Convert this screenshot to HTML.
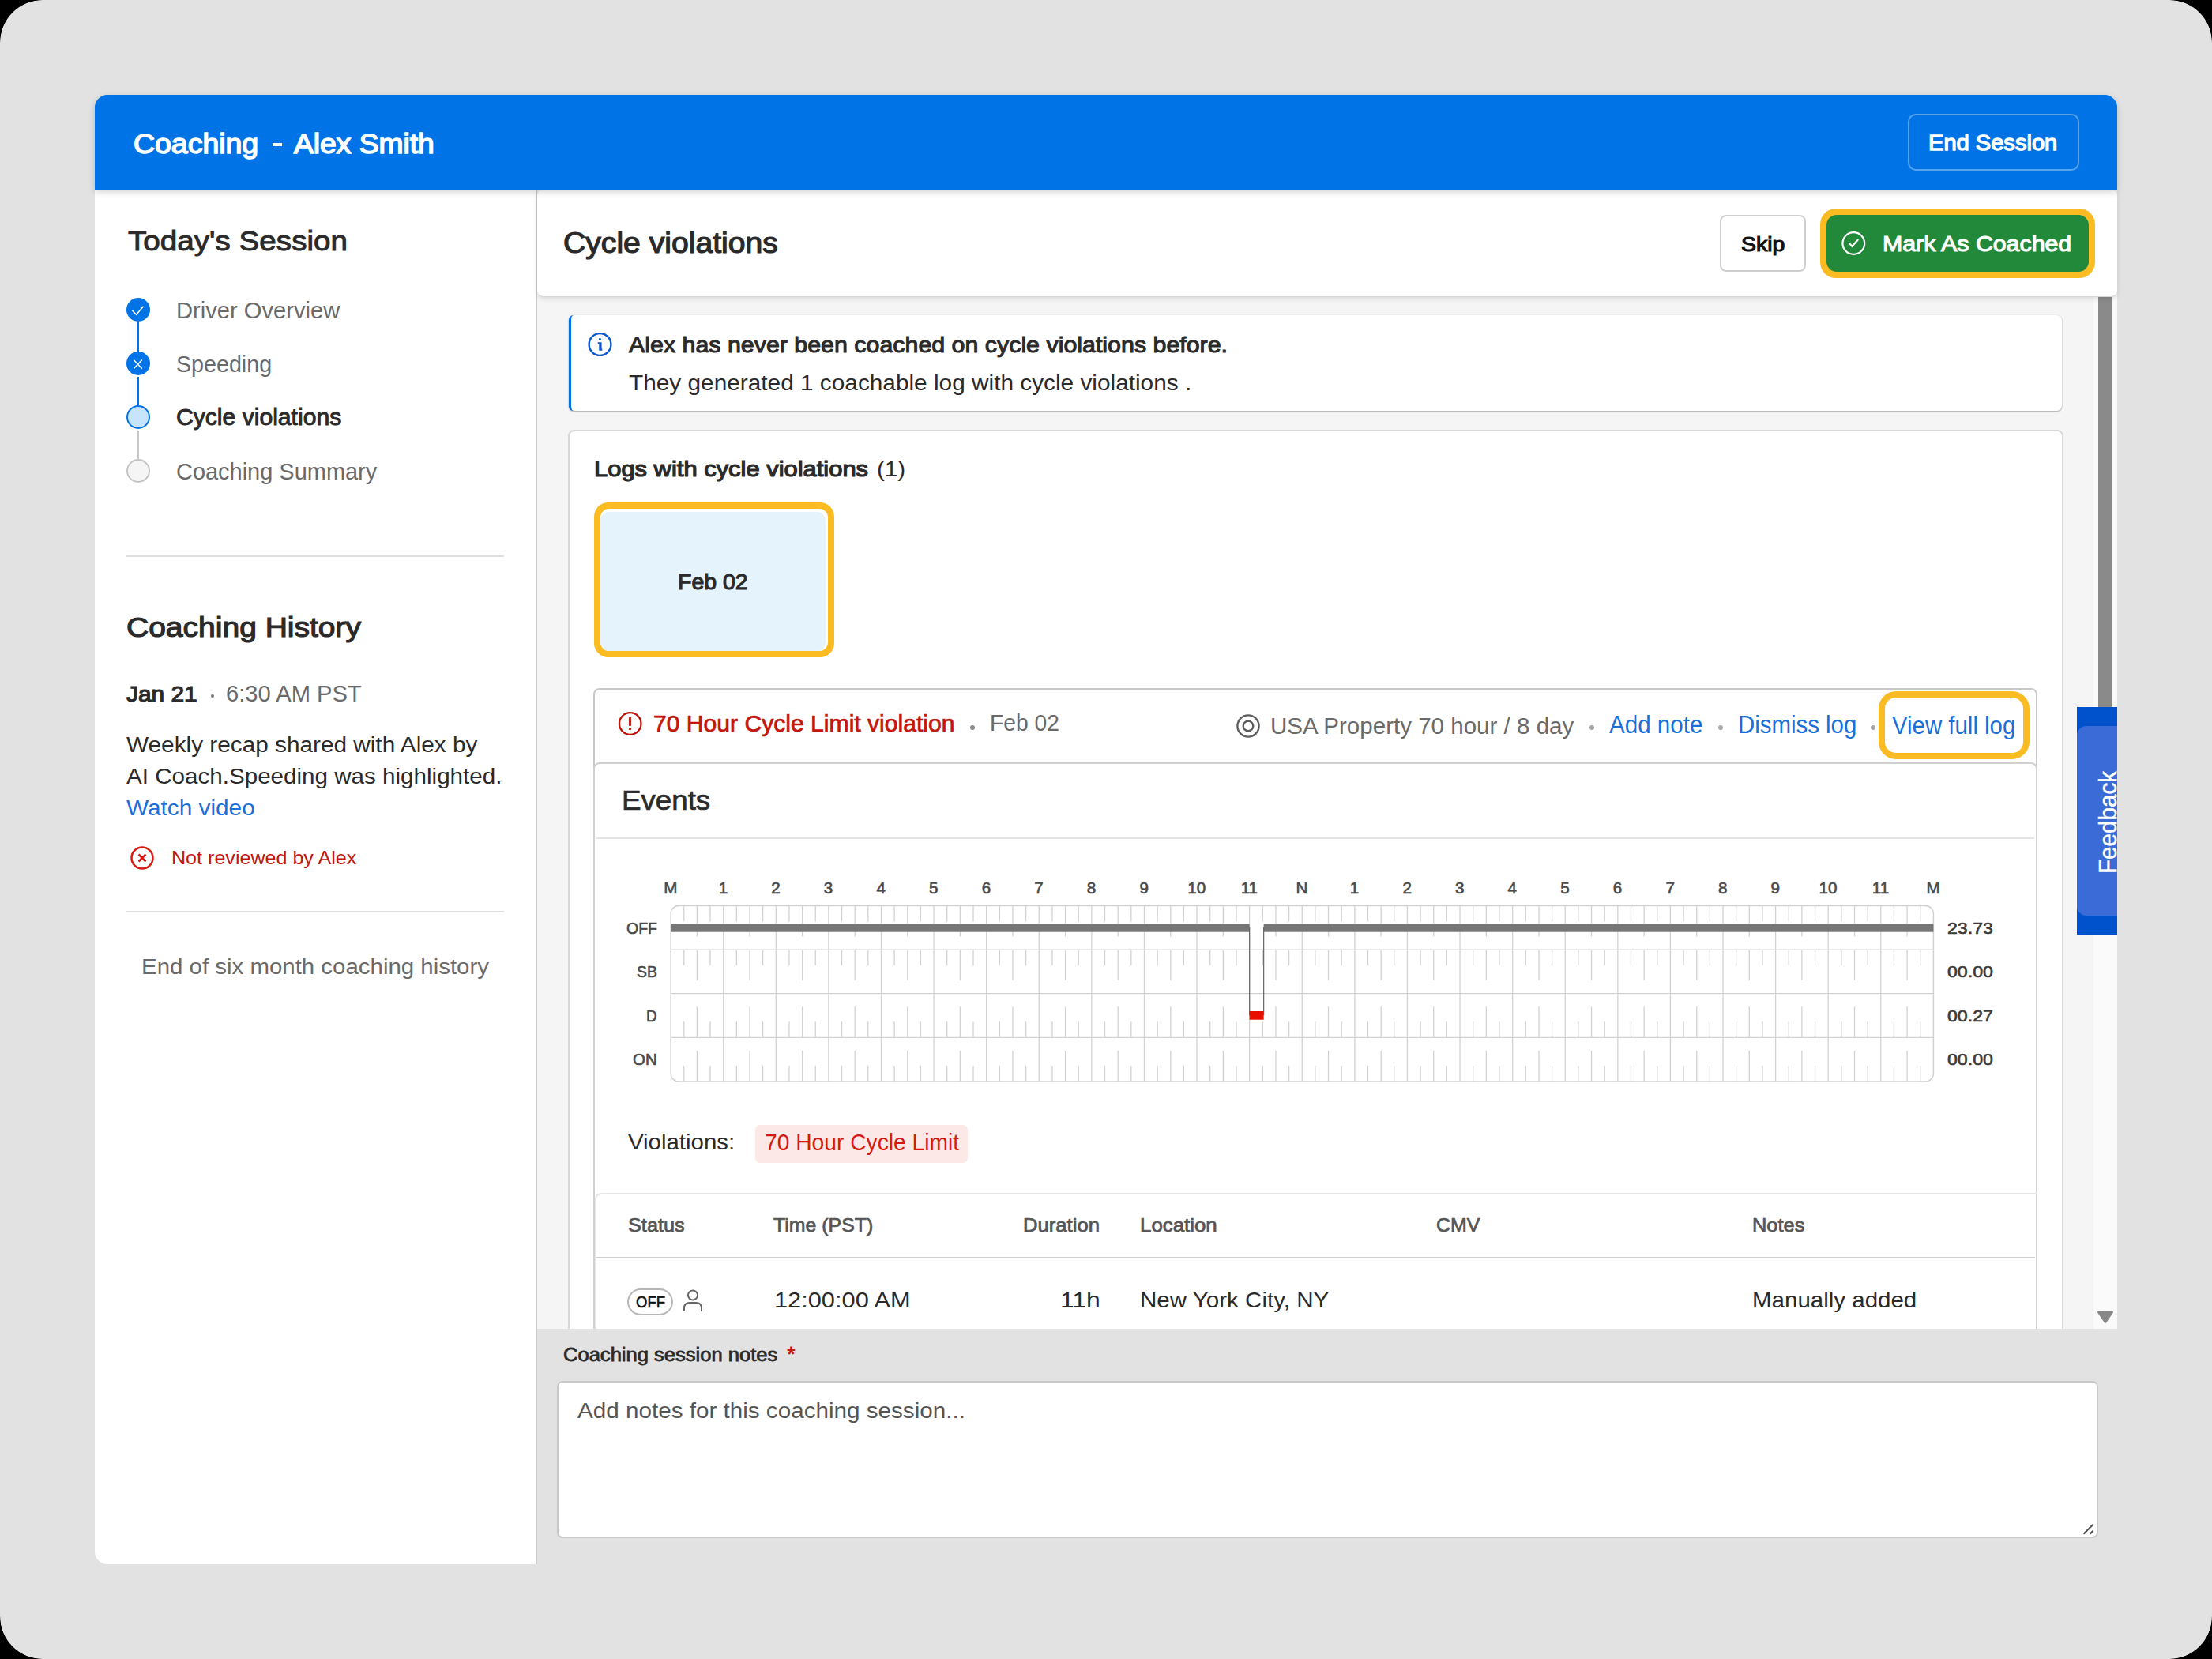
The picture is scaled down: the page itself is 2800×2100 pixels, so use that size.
<!DOCTYPE html>
<html><head><meta charset="utf-8"><title>Coaching - Alex Smith</title>
<style>
html,body{margin:0;padding:0;}
body{width:2800px;height:2100px;position:relative;overflow:hidden;background:#000;font-family:"Liberation Sans",sans-serif;}
.b{position:absolute;}
.t{position:absolute;white-space:nowrap;line-height:1;}
#clip{position:absolute;left:0;top:0;width:2800px;height:2100px;overflow:hidden;border-radius:54px;}
</style></head><body><div id="clip">
<div class="b" style="left:0.00px;top:0.00px;width:2800.00px;height:2100.00px;background:#e2e2e2;border-radius:54px;"></div>
<div class="b" style="left:120.00px;top:200.00px;width:560.00px;height:1780.00px;background:#fff;border-bottom-left-radius:16px;"></div>
<div class="b" style="left:678.00px;top:240.00px;width:2.00px;height:1740.00px;background:#c9c9c9;"></div>
<div class="b" style="left:680.00px;top:240.00px;width:2000.00px;height:1442.00px;background:#f5f5f5;"></div>
<div class="b" style="left:2650.00px;top:376.00px;width:30.00px;height:1306.00px;background:#fafafa;"></div>
<div class="b" style="left:2656.00px;top:376.00px;width:17.00px;height:519.00px;background:#8a8a8a;"></div>
<svg class="b" style="left:2654px;top:1658px" width="22" height="18"><path d="M2.5 3 L19.5 3 L11 15.5 Z" fill="#888" stroke="#888" stroke-width="3" stroke-linejoin="round"/></svg>
<div class="b" style="left:120.00px;top:120.00px;width:2560.00px;height:120.00px;background:#0073e6;border-radius:16px 16px 0 0;box-shadow:0 3px 8px rgba(0,0,0,0.18);z-index:2;"></div>
<div class="t" style="top:164.58px;font-size:34.27px;color:#fff;font-weight:400;-webkit-text-stroke:1.54px #fff;left:169.20px;transform:scaleX(1.0924);transform-origin:0 0;z-index:3;">Coaching</div>
<div class="b" style="left:344.60px;top:181.40px;width:12.70px;height:4.00px;background:#fff;z-index:3;"></div>
<div class="t" style="top:164.58px;font-size:34.27px;color:#fff;font-weight:400;-webkit-text-stroke:1.54px #fff;left:372.00px;transform:scaleX(1.0854);transform-origin:0 0;z-index:3;">Alex Smith</div>
<div class="b" style="left:2415.00px;top:144.00px;width:217.00px;height:72.00px;border:2px solid rgba(255,255,255,0.35);border-radius:10px;box-sizing:border-box;z-index:3;"></div>
<div class="t" style="top:166.13px;font-size:28.19px;color:#fff;font-weight:400;-webkit-text-stroke:1.36px #fff;left:2441.00px;transform:scaleX(1.0313);transform-origin:0 0;z-index:3;">End Session</div>
<div class="t" style="top:287.69px;font-size:34.62px;color:#2a2a2a;font-weight:400;-webkit-text-stroke:0.92px #2a2a2a;left:162.00px;transform:scaleX(1.1166);transform-origin:0 0;">Today's Session</div>
<div class="b" style="left:174.25px;top:408.00px;width:1.50px;height:37.00px;background:#0073e6;"></div>
<div class="b" style="left:174.25px;top:477.00px;width:1.50px;height:36.00px;background:#0073e6;"></div>
<div class="b" style="left:174.25px;top:545.00px;width:1.50px;height:36.00px;background:#c8c8c8;"></div>
<svg class="b" style="left:159px;top:376px" width="32" height="32"><circle cx="16" cy="16" r="15" fill="#0073e6"/><path d="M8.4 16.9 L13.5 22.3 L22.5 11.8" fill="none" stroke="#fff" stroke-width="1.5"/></svg>
<svg class="b" style="left:159px;top:444px" width="32" height="32"><circle cx="16" cy="16" r="15" fill="#0073e6"/><path d="M10.2 11.5 L20.8 22.8 M20.8 11.5 L10.2 22.8" fill="none" stroke="#fff" stroke-width="1.5"/></svg>
<svg class="b" style="left:159px;top:512px" width="32" height="32"><circle cx="16" cy="16" r="14" fill="#c6e4fb" stroke="#0073e6" stroke-width="2"/></svg>
<svg class="b" style="left:159px;top:580px" width="32" height="32"><circle cx="16" cy="16" r="14" fill="#f5f5f5" stroke="#c4c4c4" stroke-width="2"/></svg>
<div class="t" style="top:377.67px;font-size:29.33px;color:#6a6a6a;font-weight:400;left:223.00px;transform:scaleX(0.9934);transform-origin:0 0;">Driver Overview</div>
<div class="t" style="top:445.67px;font-size:29.33px;color:#6a6a6a;font-weight:400;left:223.00px;transform:scaleX(0.9772);transform-origin:0 0;">Speeding</div>
<div class="t" style="top:514.04px;font-size:28.89px;color:#2a2a2a;font-weight:400;-webkit-text-stroke:0.96px #2a2a2a;left:223.00px;transform:scaleX(1.0429);transform-origin:0 0;">Cycle violations</div>
<div class="t" style="top:581.67px;font-size:29.33px;color:#6a6a6a;font-weight:400;left:223.00px;transform:scaleX(0.9872);transform-origin:0 0;">Coaching Summary</div>
<div class="b" style="left:160.00px;top:703.00px;width:478.00px;height:2.00px;background:#e0e0e0;"></div>
<div class="t" style="top:777.24px;font-size:34.79px;color:#2a2a2a;font-weight:400;-webkit-text-stroke:1.16px #2a2a2a;left:160.00px;transform:scaleX(1.1216);transform-origin:0 0;">Coaching History</div>
<div class="t" style="top:864.32px;font-size:28.56px;color:#2a2a2a;font-weight:400;-webkit-text-stroke:1.19px #2a2a2a;left:160.00px;transform:scaleX(1.0453);transform-origin:0 0;">Jan 21</div>
<div class="b" style="left:266.50px;top:878.50px;width:4.00px;height:4.00px;background:#777;border-radius:50%;"></div>
<div class="t" style="top:863.95px;font-size:29.00px;color:#6a6a6a;font-weight:400;left:286.00px;transform:scaleX(1.0049);transform-origin:0 0;">6:30 AM PST</div>
<div class="t" style="top:929.19px;font-size:28.13px;color:#2a2a2a;font-weight:400;left:160.00px;transform:scaleX(1.0581);transform-origin:0 0;">Weekly recap shared with Alex by</div>
<div class="t" style="top:968.89px;font-size:28.13px;color:#2a2a2a;font-weight:400;left:160.00px;transform:scaleX(1.0521);transform-origin:0 0;">AI Coach.Speeding was highlighted.</div>
<div class="t" style="top:1008.59px;font-size:28.13px;color:#1a6fd9;font-weight:400;left:160.00px;transform:scaleX(1.0587);transform-origin:0 0;">Watch video</div>
<svg class="b" style="left:164px;top:1070px" width="32" height="32"><circle cx="16" cy="16" r="13.5" fill="none" stroke="#d81b12" stroke-width="2.5"/><path d="M11.5 11.5 L20.5 20.5 M20.5 11.5 L11.5 20.5" stroke="#d81b12" stroke-width="2.5"/></svg>
<div class="t" style="top:1074.08px;font-size:24.71px;color:#c4160c;font-weight:400;left:216.50px;transform:scaleX(1.0158);transform-origin:0 0;">Not reviewed by Alex</div>
<div class="b" style="left:160.00px;top:1153.00px;width:478.00px;height:2.00px;background:#e0e0e0;"></div>
<div class="t" style="top:1210.93px;font-size:27.01px;color:#6a6a6a;font-weight:400;left:179.00px;transform:scaleX(1.0899);transform-origin:0 0;">End of six month coaching history</div>
<div class="b" style="left:680.00px;top:240.00px;width:2000.00px;height:136.00px;background:#fff;border-radius:8px;border-bottom:1px solid #d6d6d6;box-sizing:border-box;box-shadow:0 2px 6px rgba(0,0,0,0.12);z-index:1;"></div>
<div class="t" style="top:289.86px;font-size:36.07px;color:#2a2a2a;font-weight:400;-webkit-text-stroke:1.20px #2a2a2a;left:713.30px;transform:scaleX(1.0853);transform-origin:0 0;z-index:1;">Cycle violations</div>
<div class="b" style="left:2177.00px;top:272.00px;width:109.00px;height:72.00px;background:#fff;border:2px solid #cfcfcf;border-radius:8px;box-sizing:border-box;z-index:1;"></div>
<div class="t" style="top:296.18px;font-size:26.25px;color:#111;font-weight:400;-webkit-text-stroke:1.14px #111;left:2203.50px;transform:scaleX(1.0844);transform-origin:0 0;z-index:1;">Skip</div>
<div class="b" style="left:2304.00px;top:264.00px;width:348.00px;height:88.00px;background:#fbbc23;border-radius:20px;z-index:1;"></div>
<div class="b" style="left:2312.00px;top:272.00px;width:332.00px;height:72.00px;background:#22883a;border-radius:13px;z-index:1;"></div>
<svg class="b" style="left:2330px;top:291px;z-index:1" width="34" height="34"><circle cx="16.3" cy="17" r="13.9" fill="none" stroke="#fff" stroke-width="2.2"/><path d="M10.5 16.6 L14.4 20.8 L22.2 12.1" fill="none" stroke="#fff" stroke-width="2.2"/></svg>
<div class="t" style="top:295.30px;font-size:27.28px;color:#fff;font-weight:400;-webkit-text-stroke:1.09px #fff;left:2383.00px;transform:scaleX(1.1115);transform-origin:0 0;z-index:1;">Mark As Coached</div>
<div class="b" style="left:720.00px;top:399.00px;width:1890.00px;height:121.00px;background:#fff;border-radius:6px;border-left:3px solid #0073e6;box-shadow:0 1px 2px rgba(0,0,0,0.3), 0 0 1px rgba(0,0,0,0.2);box-sizing:border-box;"></div>
<svg class="b" style="left:743px;top:420px" width="34" height="34"><circle cx="16.5" cy="16" r="13.9" fill="none" stroke="#0b58cc" stroke-width="2.4"/><rect x="15" y="8.3" width="2.8" height="2.6" fill="#0b58cc"/><path d="M13.7 13.3 H18.6 V21.6 H19.3 V23.7 H15.3 V16 H13.7 Z" fill="#0b58cc"/></svg>
<div class="t" style="top:423.59px;font-size:27.06px;color:#2a2a2a;font-weight:400;-webkit-text-stroke:0.99px #2a2a2a;left:796.00px;transform:scaleX(1.1229);transform-origin:0 0;">Alex has never been coached on cycle violations before.</div>
<div class="t" style="top:470.74px;font-size:27.47px;color:#2a2a2a;font-weight:400;left:796.00px;transform:scaleX(1.0847);transform-origin:0 0;">They generated 1 coachable log with cycle violations .</div>
<div class="b" style="left:718.50px;top:544.00px;width:1893.00px;height:1176.00px;background:#fff;border:2px solid #d8d8d8;border-radius:8px;box-sizing:border-box;"></div>
<div class="t" style="top:580.00px;font-size:27.40px;color:#2a2a2a;font-weight:400;-webkit-text-stroke:1.23px #2a2a2a;left:752.40px;transform:scaleX(1.1286);transform-origin:0 0;">Logs with cycle violations</div>
<div class="t" style="top:579.65px;font-size:27.82px;color:#2a2a2a;font-weight:400;left:1110.40px;transform:scaleX(1.0654);transform-origin:0 0;">(1)</div>
<div class="b" style="left:752.00px;top:635.80px;width:304.00px;height:196.00px;background:#fbbc23;border-radius:18px;"></div>
<div class="b" style="left:760.00px;top:643.80px;width:288.00px;height:180.00px;background:#fff;border-radius:11px;"></div>
<div class="b" style="left:760.00px;top:648.00px;width:285.00px;height:175.80px;background:#e5f3fd;border-radius:11px;"></div>
<div class="t" style="top:722.58px;font-size:27.66px;color:#2a2a2a;font-weight:400;-webkit-text-stroke:1.11px #2a2a2a;left:857.80px;transform:scaleX(1.0293);transform-origin:0 0;">Feb 02</div>
<div class="b" style="left:751.00px;top:871.00px;width:1828.00px;height:849.00px;background:#fff;border:2px solid #c8c8c8;border-radius:8px;box-sizing:border-box;"></div>
<svg class="b" style="left:781px;top:900px" width="34" height="34"><circle cx="16.7" cy="16" r="13.8" fill="none" stroke="#c00f05" stroke-width="2.3"/><rect x="15.1" y="8" width="2.8" height="10.9" fill="#c00f05"/><rect x="15.1" y="21" width="2.8" height="2.9" fill="#c00f05"/></svg>
<div class="t" style="top:901.69px;font-size:28.71px;color:#c4160c;font-weight:400;-webkit-text-stroke:0.72px #c4160c;left:826.80px;transform:scaleX(1.0489);transform-origin:0 0;">70 Hour Cycle Limit violation</div>
<div class="b" style="left:1228.00px;top:918.00px;width:6.00px;height:6.00px;background:#888;border-radius:50%;"></div>
<div class="t" style="top:901.45px;font-size:29.00px;color:#6a6a6a;font-weight:400;left:1253.00px;transform:scaleX(0.9747);transform-origin:0 0;">Feb 02</div>
<svg class="b" style="left:1563px;top:902.3px" width="34" height="34"><circle cx="17" cy="17" r="13.6" fill="none" stroke="#5e5e5e" stroke-width="2.4"/><circle cx="17" cy="17" r="6.3" fill="none" stroke="#5e5e5e" stroke-width="2.4"/></svg>
<div class="t" style="top:904.20px;font-size:30.23px;color:#6a6a6a;font-weight:400;left:1608.00px;transform:scaleX(0.9776);transform-origin:0 0;">USA Property 70 hour / 8 day</div>
<div class="b" style="left:2011.50px;top:918.00px;width:6.00px;height:6.00px;background:#a8a8a8;border-radius:50%;"></div>
<div class="t" style="top:902.51px;font-size:30.81px;color:#1a6fd9;font-weight:400;left:2036.60px;transform:scaleX(0.9602);transform-origin:0 0;">Add note</div>
<div class="b" style="left:2174.50px;top:918.00px;width:6.00px;height:6.00px;background:#a8a8a8;border-radius:50%;"></div>
<div class="t" style="top:902.51px;font-size:30.81px;color:#1a6fd9;font-weight:400;left:2199.70px;transform:scaleX(0.9546);transform-origin:0 0;">Dismiss log</div>
<div class="b" style="left:2368.00px;top:918.00px;width:6.00px;height:6.00px;background:#a8a8a8;border-radius:50%;"></div>
<div class="b" style="left:2378.00px;top:874.60px;width:191.00px;height:86.40px;border:8px solid #fbbc23;border-radius:22px;box-sizing:border-box;"></div>
<div class="t" style="top:904.41px;font-size:30.81px;color:#1a6fd9;font-weight:400;left:2394.70px;transform:scaleX(0.9543);transform-origin:0 0;">View full log</div>
<div class="b" style="left:751.00px;top:965.00px;width:1828.00px;height:755.00px;background:#fff;border:2px solid #d0d0d0;border-radius:8px 8px 0 0;box-sizing:border-box;"></div>
<div class="t" style="top:995.90px;font-size:35.55px;color:#2a2a2a;font-weight:400;-webkit-text-stroke:0.71px #2a2a2a;left:787.00px;transform:scaleX(1.0326);transform-origin:0 0;">Events</div>
<div class="b" style="left:755.00px;top:1060.00px;width:1820.00px;height:2.00px;background:#e4e4e4;"></div>
<svg class="b" style="left:0;top:0" width="2800" height="2100"><line x1="915.70" y1="1146.40" x2="915.70" y2="1369.00" stroke="#d2d2d2" stroke-width="1.3"/><line x1="982.29" y1="1146.40" x2="982.29" y2="1369.00" stroke="#d2d2d2" stroke-width="1.3"/><line x1="1048.89" y1="1146.40" x2="1048.89" y2="1369.00" stroke="#d2d2d2" stroke-width="1.3"/><line x1="1115.48" y1="1146.40" x2="1115.48" y2="1369.00" stroke="#d2d2d2" stroke-width="1.3"/><line x1="1182.08" y1="1146.40" x2="1182.08" y2="1369.00" stroke="#d2d2d2" stroke-width="1.3"/><line x1="1248.68" y1="1146.40" x2="1248.68" y2="1369.00" stroke="#d2d2d2" stroke-width="1.3"/><line x1="1315.27" y1="1146.40" x2="1315.27" y2="1369.00" stroke="#d2d2d2" stroke-width="1.3"/><line x1="1381.87" y1="1146.40" x2="1381.87" y2="1369.00" stroke="#d2d2d2" stroke-width="1.3"/><line x1="1448.46" y1="1146.40" x2="1448.46" y2="1369.00" stroke="#d2d2d2" stroke-width="1.3"/><line x1="1515.06" y1="1146.40" x2="1515.06" y2="1369.00" stroke="#d2d2d2" stroke-width="1.3"/><line x1="1581.65" y1="1146.40" x2="1581.65" y2="1369.00" stroke="#d2d2d2" stroke-width="1.3"/><line x1="1648.25" y1="1146.40" x2="1648.25" y2="1369.00" stroke="#d2d2d2" stroke-width="1.3"/><line x1="1714.85" y1="1146.40" x2="1714.85" y2="1369.00" stroke="#d2d2d2" stroke-width="1.3"/><line x1="1781.44" y1="1146.40" x2="1781.44" y2="1369.00" stroke="#d2d2d2" stroke-width="1.3"/><line x1="1848.04" y1="1146.40" x2="1848.04" y2="1369.00" stroke="#d2d2d2" stroke-width="1.3"/><line x1="1914.63" y1="1146.40" x2="1914.63" y2="1369.00" stroke="#d2d2d2" stroke-width="1.3"/><line x1="1981.23" y1="1146.40" x2="1981.23" y2="1369.00" stroke="#d2d2d2" stroke-width="1.3"/><line x1="2047.83" y1="1146.40" x2="2047.83" y2="1369.00" stroke="#d2d2d2" stroke-width="1.3"/><line x1="2114.42" y1="1146.40" x2="2114.42" y2="1369.00" stroke="#d2d2d2" stroke-width="1.3"/><line x1="2181.02" y1="1146.40" x2="2181.02" y2="1369.00" stroke="#d2d2d2" stroke-width="1.3"/><line x1="2247.61" y1="1146.40" x2="2247.61" y2="1369.00" stroke="#d2d2d2" stroke-width="1.3"/><line x1="2314.21" y1="1146.40" x2="2314.21" y2="1369.00" stroke="#d2d2d2" stroke-width="1.3"/><line x1="2380.80" y1="1146.40" x2="2380.80" y2="1369.00" stroke="#d2d2d2" stroke-width="1.3"/><line x1="849.10" y1="1202.05" x2="2447.40" y2="1202.05" stroke="#d2d2d2" stroke-width="1.3"/><line x1="849.10" y1="1257.70" x2="2447.40" y2="1257.70" stroke="#d2d2d2" stroke-width="1.3"/><line x1="849.10" y1="1313.35" x2="2447.40" y2="1313.35" stroke="#d2d2d2" stroke-width="1.3"/><line x1="865.75" y1="1146.40" x2="865.75" y2="1166.40" stroke="#d2d2d2" stroke-width="1.3"/><line x1="865.75" y1="1202.05" x2="865.75" y2="1222.05" stroke="#d2d2d2" stroke-width="1.3"/><line x1="865.75" y1="1293.35" x2="865.75" y2="1313.35" stroke="#d2d2d2" stroke-width="1.3"/><line x1="865.75" y1="1349.00" x2="865.75" y2="1369.00" stroke="#d2d2d2" stroke-width="1.3"/><line x1="882.40" y1="1146.40" x2="882.40" y2="1185.40" stroke="#d2d2d2" stroke-width="1.3"/><line x1="882.40" y1="1202.05" x2="882.40" y2="1241.05" stroke="#d2d2d2" stroke-width="1.3"/><line x1="882.40" y1="1274.35" x2="882.40" y2="1313.35" stroke="#d2d2d2" stroke-width="1.3"/><line x1="882.40" y1="1330.00" x2="882.40" y2="1369.00" stroke="#d2d2d2" stroke-width="1.3"/><line x1="899.05" y1="1146.40" x2="899.05" y2="1166.40" stroke="#d2d2d2" stroke-width="1.3"/><line x1="899.05" y1="1202.05" x2="899.05" y2="1222.05" stroke="#d2d2d2" stroke-width="1.3"/><line x1="899.05" y1="1293.35" x2="899.05" y2="1313.35" stroke="#d2d2d2" stroke-width="1.3"/><line x1="899.05" y1="1349.00" x2="899.05" y2="1369.00" stroke="#d2d2d2" stroke-width="1.3"/><line x1="932.34" y1="1146.40" x2="932.34" y2="1166.40" stroke="#d2d2d2" stroke-width="1.3"/><line x1="932.34" y1="1202.05" x2="932.34" y2="1222.05" stroke="#d2d2d2" stroke-width="1.3"/><line x1="932.34" y1="1293.35" x2="932.34" y2="1313.35" stroke="#d2d2d2" stroke-width="1.3"/><line x1="932.34" y1="1349.00" x2="932.34" y2="1369.00" stroke="#d2d2d2" stroke-width="1.3"/><line x1="948.99" y1="1146.40" x2="948.99" y2="1185.40" stroke="#d2d2d2" stroke-width="1.3"/><line x1="948.99" y1="1202.05" x2="948.99" y2="1241.05" stroke="#d2d2d2" stroke-width="1.3"/><line x1="948.99" y1="1274.35" x2="948.99" y2="1313.35" stroke="#d2d2d2" stroke-width="1.3"/><line x1="948.99" y1="1330.00" x2="948.99" y2="1369.00" stroke="#d2d2d2" stroke-width="1.3"/><line x1="965.64" y1="1146.40" x2="965.64" y2="1166.40" stroke="#d2d2d2" stroke-width="1.3"/><line x1="965.64" y1="1202.05" x2="965.64" y2="1222.05" stroke="#d2d2d2" stroke-width="1.3"/><line x1="965.64" y1="1293.35" x2="965.64" y2="1313.35" stroke="#d2d2d2" stroke-width="1.3"/><line x1="965.64" y1="1349.00" x2="965.64" y2="1369.00" stroke="#d2d2d2" stroke-width="1.3"/><line x1="998.94" y1="1146.40" x2="998.94" y2="1166.40" stroke="#d2d2d2" stroke-width="1.3"/><line x1="998.94" y1="1202.05" x2="998.94" y2="1222.05" stroke="#d2d2d2" stroke-width="1.3"/><line x1="998.94" y1="1293.35" x2="998.94" y2="1313.35" stroke="#d2d2d2" stroke-width="1.3"/><line x1="998.94" y1="1349.00" x2="998.94" y2="1369.00" stroke="#d2d2d2" stroke-width="1.3"/><line x1="1015.59" y1="1146.40" x2="1015.59" y2="1185.40" stroke="#d2d2d2" stroke-width="1.3"/><line x1="1015.59" y1="1202.05" x2="1015.59" y2="1241.05" stroke="#d2d2d2" stroke-width="1.3"/><line x1="1015.59" y1="1274.35" x2="1015.59" y2="1313.35" stroke="#d2d2d2" stroke-width="1.3"/><line x1="1015.59" y1="1330.00" x2="1015.59" y2="1369.00" stroke="#d2d2d2" stroke-width="1.3"/><line x1="1032.24" y1="1146.40" x2="1032.24" y2="1166.40" stroke="#d2d2d2" stroke-width="1.3"/><line x1="1032.24" y1="1202.05" x2="1032.24" y2="1222.05" stroke="#d2d2d2" stroke-width="1.3"/><line x1="1032.24" y1="1293.35" x2="1032.24" y2="1313.35" stroke="#d2d2d2" stroke-width="1.3"/><line x1="1032.24" y1="1349.00" x2="1032.24" y2="1369.00" stroke="#d2d2d2" stroke-width="1.3"/><line x1="1065.54" y1="1146.40" x2="1065.54" y2="1166.40" stroke="#d2d2d2" stroke-width="1.3"/><line x1="1065.54" y1="1202.05" x2="1065.54" y2="1222.05" stroke="#d2d2d2" stroke-width="1.3"/><line x1="1065.54" y1="1293.35" x2="1065.54" y2="1313.35" stroke="#d2d2d2" stroke-width="1.3"/><line x1="1065.54" y1="1349.00" x2="1065.54" y2="1369.00" stroke="#d2d2d2" stroke-width="1.3"/><line x1="1082.19" y1="1146.40" x2="1082.19" y2="1185.40" stroke="#d2d2d2" stroke-width="1.3"/><line x1="1082.19" y1="1202.05" x2="1082.19" y2="1241.05" stroke="#d2d2d2" stroke-width="1.3"/><line x1="1082.19" y1="1274.35" x2="1082.19" y2="1313.35" stroke="#d2d2d2" stroke-width="1.3"/><line x1="1082.19" y1="1330.00" x2="1082.19" y2="1369.00" stroke="#d2d2d2" stroke-width="1.3"/><line x1="1098.83" y1="1146.40" x2="1098.83" y2="1166.40" stroke="#d2d2d2" stroke-width="1.3"/><line x1="1098.83" y1="1202.05" x2="1098.83" y2="1222.05" stroke="#d2d2d2" stroke-width="1.3"/><line x1="1098.83" y1="1293.35" x2="1098.83" y2="1313.35" stroke="#d2d2d2" stroke-width="1.3"/><line x1="1098.83" y1="1349.00" x2="1098.83" y2="1369.00" stroke="#d2d2d2" stroke-width="1.3"/><line x1="1132.13" y1="1146.40" x2="1132.13" y2="1166.40" stroke="#d2d2d2" stroke-width="1.3"/><line x1="1132.13" y1="1202.05" x2="1132.13" y2="1222.05" stroke="#d2d2d2" stroke-width="1.3"/><line x1="1132.13" y1="1293.35" x2="1132.13" y2="1313.35" stroke="#d2d2d2" stroke-width="1.3"/><line x1="1132.13" y1="1349.00" x2="1132.13" y2="1369.00" stroke="#d2d2d2" stroke-width="1.3"/><line x1="1148.78" y1="1146.40" x2="1148.78" y2="1185.40" stroke="#d2d2d2" stroke-width="1.3"/><line x1="1148.78" y1="1202.05" x2="1148.78" y2="1241.05" stroke="#d2d2d2" stroke-width="1.3"/><line x1="1148.78" y1="1274.35" x2="1148.78" y2="1313.35" stroke="#d2d2d2" stroke-width="1.3"/><line x1="1148.78" y1="1330.00" x2="1148.78" y2="1369.00" stroke="#d2d2d2" stroke-width="1.3"/><line x1="1165.43" y1="1146.40" x2="1165.43" y2="1166.40" stroke="#d2d2d2" stroke-width="1.3"/><line x1="1165.43" y1="1202.05" x2="1165.43" y2="1222.05" stroke="#d2d2d2" stroke-width="1.3"/><line x1="1165.43" y1="1293.35" x2="1165.43" y2="1313.35" stroke="#d2d2d2" stroke-width="1.3"/><line x1="1165.43" y1="1349.00" x2="1165.43" y2="1369.00" stroke="#d2d2d2" stroke-width="1.3"/><line x1="1198.73" y1="1146.40" x2="1198.73" y2="1166.40" stroke="#d2d2d2" stroke-width="1.3"/><line x1="1198.73" y1="1202.05" x2="1198.73" y2="1222.05" stroke="#d2d2d2" stroke-width="1.3"/><line x1="1198.73" y1="1293.35" x2="1198.73" y2="1313.35" stroke="#d2d2d2" stroke-width="1.3"/><line x1="1198.73" y1="1349.00" x2="1198.73" y2="1369.00" stroke="#d2d2d2" stroke-width="1.3"/><line x1="1215.38" y1="1146.40" x2="1215.38" y2="1185.40" stroke="#d2d2d2" stroke-width="1.3"/><line x1="1215.38" y1="1202.05" x2="1215.38" y2="1241.05" stroke="#d2d2d2" stroke-width="1.3"/><line x1="1215.38" y1="1274.35" x2="1215.38" y2="1313.35" stroke="#d2d2d2" stroke-width="1.3"/><line x1="1215.38" y1="1330.00" x2="1215.38" y2="1369.00" stroke="#d2d2d2" stroke-width="1.3"/><line x1="1232.03" y1="1146.40" x2="1232.03" y2="1166.40" stroke="#d2d2d2" stroke-width="1.3"/><line x1="1232.03" y1="1202.05" x2="1232.03" y2="1222.05" stroke="#d2d2d2" stroke-width="1.3"/><line x1="1232.03" y1="1293.35" x2="1232.03" y2="1313.35" stroke="#d2d2d2" stroke-width="1.3"/><line x1="1232.03" y1="1349.00" x2="1232.03" y2="1369.00" stroke="#d2d2d2" stroke-width="1.3"/><line x1="1265.32" y1="1146.40" x2="1265.32" y2="1166.40" stroke="#d2d2d2" stroke-width="1.3"/><line x1="1265.32" y1="1202.05" x2="1265.32" y2="1222.05" stroke="#d2d2d2" stroke-width="1.3"/><line x1="1265.32" y1="1293.35" x2="1265.32" y2="1313.35" stroke="#d2d2d2" stroke-width="1.3"/><line x1="1265.32" y1="1349.00" x2="1265.32" y2="1369.00" stroke="#d2d2d2" stroke-width="1.3"/><line x1="1281.97" y1="1146.40" x2="1281.97" y2="1185.40" stroke="#d2d2d2" stroke-width="1.3"/><line x1="1281.97" y1="1202.05" x2="1281.97" y2="1241.05" stroke="#d2d2d2" stroke-width="1.3"/><line x1="1281.97" y1="1274.35" x2="1281.97" y2="1313.35" stroke="#d2d2d2" stroke-width="1.3"/><line x1="1281.97" y1="1330.00" x2="1281.97" y2="1369.00" stroke="#d2d2d2" stroke-width="1.3"/><line x1="1298.62" y1="1146.40" x2="1298.62" y2="1166.40" stroke="#d2d2d2" stroke-width="1.3"/><line x1="1298.62" y1="1202.05" x2="1298.62" y2="1222.05" stroke="#d2d2d2" stroke-width="1.3"/><line x1="1298.62" y1="1293.35" x2="1298.62" y2="1313.35" stroke="#d2d2d2" stroke-width="1.3"/><line x1="1298.62" y1="1349.00" x2="1298.62" y2="1369.00" stroke="#d2d2d2" stroke-width="1.3"/><line x1="1331.92" y1="1146.40" x2="1331.92" y2="1166.40" stroke="#d2d2d2" stroke-width="1.3"/><line x1="1331.92" y1="1202.05" x2="1331.92" y2="1222.05" stroke="#d2d2d2" stroke-width="1.3"/><line x1="1331.92" y1="1293.35" x2="1331.92" y2="1313.35" stroke="#d2d2d2" stroke-width="1.3"/><line x1="1331.92" y1="1349.00" x2="1331.92" y2="1369.00" stroke="#d2d2d2" stroke-width="1.3"/><line x1="1348.57" y1="1146.40" x2="1348.57" y2="1185.40" stroke="#d2d2d2" stroke-width="1.3"/><line x1="1348.57" y1="1202.05" x2="1348.57" y2="1241.05" stroke="#d2d2d2" stroke-width="1.3"/><line x1="1348.57" y1="1274.35" x2="1348.57" y2="1313.35" stroke="#d2d2d2" stroke-width="1.3"/><line x1="1348.57" y1="1330.00" x2="1348.57" y2="1369.00" stroke="#d2d2d2" stroke-width="1.3"/><line x1="1365.22" y1="1146.40" x2="1365.22" y2="1166.40" stroke="#d2d2d2" stroke-width="1.3"/><line x1="1365.22" y1="1202.05" x2="1365.22" y2="1222.05" stroke="#d2d2d2" stroke-width="1.3"/><line x1="1365.22" y1="1293.35" x2="1365.22" y2="1313.35" stroke="#d2d2d2" stroke-width="1.3"/><line x1="1365.22" y1="1349.00" x2="1365.22" y2="1369.00" stroke="#d2d2d2" stroke-width="1.3"/><line x1="1398.52" y1="1146.40" x2="1398.52" y2="1166.40" stroke="#d2d2d2" stroke-width="1.3"/><line x1="1398.52" y1="1202.05" x2="1398.52" y2="1222.05" stroke="#d2d2d2" stroke-width="1.3"/><line x1="1398.52" y1="1293.35" x2="1398.52" y2="1313.35" stroke="#d2d2d2" stroke-width="1.3"/><line x1="1398.52" y1="1349.00" x2="1398.52" y2="1369.00" stroke="#d2d2d2" stroke-width="1.3"/><line x1="1415.16" y1="1146.40" x2="1415.16" y2="1185.40" stroke="#d2d2d2" stroke-width="1.3"/><line x1="1415.16" y1="1202.05" x2="1415.16" y2="1241.05" stroke="#d2d2d2" stroke-width="1.3"/><line x1="1415.16" y1="1274.35" x2="1415.16" y2="1313.35" stroke="#d2d2d2" stroke-width="1.3"/><line x1="1415.16" y1="1330.00" x2="1415.16" y2="1369.00" stroke="#d2d2d2" stroke-width="1.3"/><line x1="1431.81" y1="1146.40" x2="1431.81" y2="1166.40" stroke="#d2d2d2" stroke-width="1.3"/><line x1="1431.81" y1="1202.05" x2="1431.81" y2="1222.05" stroke="#d2d2d2" stroke-width="1.3"/><line x1="1431.81" y1="1293.35" x2="1431.81" y2="1313.35" stroke="#d2d2d2" stroke-width="1.3"/><line x1="1431.81" y1="1349.00" x2="1431.81" y2="1369.00" stroke="#d2d2d2" stroke-width="1.3"/><line x1="1465.11" y1="1146.40" x2="1465.11" y2="1166.40" stroke="#d2d2d2" stroke-width="1.3"/><line x1="1465.11" y1="1202.05" x2="1465.11" y2="1222.05" stroke="#d2d2d2" stroke-width="1.3"/><line x1="1465.11" y1="1293.35" x2="1465.11" y2="1313.35" stroke="#d2d2d2" stroke-width="1.3"/><line x1="1465.11" y1="1349.00" x2="1465.11" y2="1369.00" stroke="#d2d2d2" stroke-width="1.3"/><line x1="1481.76" y1="1146.40" x2="1481.76" y2="1185.40" stroke="#d2d2d2" stroke-width="1.3"/><line x1="1481.76" y1="1202.05" x2="1481.76" y2="1241.05" stroke="#d2d2d2" stroke-width="1.3"/><line x1="1481.76" y1="1274.35" x2="1481.76" y2="1313.35" stroke="#d2d2d2" stroke-width="1.3"/><line x1="1481.76" y1="1330.00" x2="1481.76" y2="1369.00" stroke="#d2d2d2" stroke-width="1.3"/><line x1="1498.41" y1="1146.40" x2="1498.41" y2="1166.40" stroke="#d2d2d2" stroke-width="1.3"/><line x1="1498.41" y1="1202.05" x2="1498.41" y2="1222.05" stroke="#d2d2d2" stroke-width="1.3"/><line x1="1498.41" y1="1293.35" x2="1498.41" y2="1313.35" stroke="#d2d2d2" stroke-width="1.3"/><line x1="1498.41" y1="1349.00" x2="1498.41" y2="1369.00" stroke="#d2d2d2" stroke-width="1.3"/><line x1="1531.71" y1="1146.40" x2="1531.71" y2="1166.40" stroke="#d2d2d2" stroke-width="1.3"/><line x1="1531.71" y1="1202.05" x2="1531.71" y2="1222.05" stroke="#d2d2d2" stroke-width="1.3"/><line x1="1531.71" y1="1293.35" x2="1531.71" y2="1313.35" stroke="#d2d2d2" stroke-width="1.3"/><line x1="1531.71" y1="1349.00" x2="1531.71" y2="1369.00" stroke="#d2d2d2" stroke-width="1.3"/><line x1="1548.36" y1="1146.40" x2="1548.36" y2="1185.40" stroke="#d2d2d2" stroke-width="1.3"/><line x1="1548.36" y1="1202.05" x2="1548.36" y2="1241.05" stroke="#d2d2d2" stroke-width="1.3"/><line x1="1548.36" y1="1274.35" x2="1548.36" y2="1313.35" stroke="#d2d2d2" stroke-width="1.3"/><line x1="1548.36" y1="1330.00" x2="1548.36" y2="1369.00" stroke="#d2d2d2" stroke-width="1.3"/><line x1="1565.01" y1="1146.40" x2="1565.01" y2="1166.40" stroke="#d2d2d2" stroke-width="1.3"/><line x1="1565.01" y1="1202.05" x2="1565.01" y2="1222.05" stroke="#d2d2d2" stroke-width="1.3"/><line x1="1565.01" y1="1293.35" x2="1565.01" y2="1313.35" stroke="#d2d2d2" stroke-width="1.3"/><line x1="1565.01" y1="1349.00" x2="1565.01" y2="1369.00" stroke="#d2d2d2" stroke-width="1.3"/><line x1="1598.30" y1="1146.40" x2="1598.30" y2="1166.40" stroke="#d2d2d2" stroke-width="1.3"/><line x1="1598.30" y1="1202.05" x2="1598.30" y2="1222.05" stroke="#d2d2d2" stroke-width="1.3"/><line x1="1598.30" y1="1293.35" x2="1598.30" y2="1313.35" stroke="#d2d2d2" stroke-width="1.3"/><line x1="1598.30" y1="1349.00" x2="1598.30" y2="1369.00" stroke="#d2d2d2" stroke-width="1.3"/><line x1="1614.95" y1="1146.40" x2="1614.95" y2="1185.40" stroke="#d2d2d2" stroke-width="1.3"/><line x1="1614.95" y1="1202.05" x2="1614.95" y2="1241.05" stroke="#d2d2d2" stroke-width="1.3"/><line x1="1614.95" y1="1274.35" x2="1614.95" y2="1313.35" stroke="#d2d2d2" stroke-width="1.3"/><line x1="1614.95" y1="1330.00" x2="1614.95" y2="1369.00" stroke="#d2d2d2" stroke-width="1.3"/><line x1="1631.60" y1="1146.40" x2="1631.60" y2="1166.40" stroke="#d2d2d2" stroke-width="1.3"/><line x1="1631.60" y1="1202.05" x2="1631.60" y2="1222.05" stroke="#d2d2d2" stroke-width="1.3"/><line x1="1631.60" y1="1293.35" x2="1631.60" y2="1313.35" stroke="#d2d2d2" stroke-width="1.3"/><line x1="1631.60" y1="1349.00" x2="1631.60" y2="1369.00" stroke="#d2d2d2" stroke-width="1.3"/><line x1="1664.90" y1="1146.40" x2="1664.90" y2="1166.40" stroke="#d2d2d2" stroke-width="1.3"/><line x1="1664.90" y1="1202.05" x2="1664.90" y2="1222.05" stroke="#d2d2d2" stroke-width="1.3"/><line x1="1664.90" y1="1293.35" x2="1664.90" y2="1313.35" stroke="#d2d2d2" stroke-width="1.3"/><line x1="1664.90" y1="1349.00" x2="1664.90" y2="1369.00" stroke="#d2d2d2" stroke-width="1.3"/><line x1="1681.55" y1="1146.40" x2="1681.55" y2="1185.40" stroke="#d2d2d2" stroke-width="1.3"/><line x1="1681.55" y1="1202.05" x2="1681.55" y2="1241.05" stroke="#d2d2d2" stroke-width="1.3"/><line x1="1681.55" y1="1274.35" x2="1681.55" y2="1313.35" stroke="#d2d2d2" stroke-width="1.3"/><line x1="1681.55" y1="1330.00" x2="1681.55" y2="1369.00" stroke="#d2d2d2" stroke-width="1.3"/><line x1="1698.20" y1="1146.40" x2="1698.20" y2="1166.40" stroke="#d2d2d2" stroke-width="1.3"/><line x1="1698.20" y1="1202.05" x2="1698.20" y2="1222.05" stroke="#d2d2d2" stroke-width="1.3"/><line x1="1698.20" y1="1293.35" x2="1698.20" y2="1313.35" stroke="#d2d2d2" stroke-width="1.3"/><line x1="1698.20" y1="1349.00" x2="1698.20" y2="1369.00" stroke="#d2d2d2" stroke-width="1.3"/><line x1="1731.49" y1="1146.40" x2="1731.49" y2="1166.40" stroke="#d2d2d2" stroke-width="1.3"/><line x1="1731.49" y1="1202.05" x2="1731.49" y2="1222.05" stroke="#d2d2d2" stroke-width="1.3"/><line x1="1731.49" y1="1293.35" x2="1731.49" y2="1313.35" stroke="#d2d2d2" stroke-width="1.3"/><line x1="1731.49" y1="1349.00" x2="1731.49" y2="1369.00" stroke="#d2d2d2" stroke-width="1.3"/><line x1="1748.14" y1="1146.40" x2="1748.14" y2="1185.40" stroke="#d2d2d2" stroke-width="1.3"/><line x1="1748.14" y1="1202.05" x2="1748.14" y2="1241.05" stroke="#d2d2d2" stroke-width="1.3"/><line x1="1748.14" y1="1274.35" x2="1748.14" y2="1313.35" stroke="#d2d2d2" stroke-width="1.3"/><line x1="1748.14" y1="1330.00" x2="1748.14" y2="1369.00" stroke="#d2d2d2" stroke-width="1.3"/><line x1="1764.79" y1="1146.40" x2="1764.79" y2="1166.40" stroke="#d2d2d2" stroke-width="1.3"/><line x1="1764.79" y1="1202.05" x2="1764.79" y2="1222.05" stroke="#d2d2d2" stroke-width="1.3"/><line x1="1764.79" y1="1293.35" x2="1764.79" y2="1313.35" stroke="#d2d2d2" stroke-width="1.3"/><line x1="1764.79" y1="1349.00" x2="1764.79" y2="1369.00" stroke="#d2d2d2" stroke-width="1.3"/><line x1="1798.09" y1="1146.40" x2="1798.09" y2="1166.40" stroke="#d2d2d2" stroke-width="1.3"/><line x1="1798.09" y1="1202.05" x2="1798.09" y2="1222.05" stroke="#d2d2d2" stroke-width="1.3"/><line x1="1798.09" y1="1293.35" x2="1798.09" y2="1313.35" stroke="#d2d2d2" stroke-width="1.3"/><line x1="1798.09" y1="1349.00" x2="1798.09" y2="1369.00" stroke="#d2d2d2" stroke-width="1.3"/><line x1="1814.74" y1="1146.40" x2="1814.74" y2="1185.40" stroke="#d2d2d2" stroke-width="1.3"/><line x1="1814.74" y1="1202.05" x2="1814.74" y2="1241.05" stroke="#d2d2d2" stroke-width="1.3"/><line x1="1814.74" y1="1274.35" x2="1814.74" y2="1313.35" stroke="#d2d2d2" stroke-width="1.3"/><line x1="1814.74" y1="1330.00" x2="1814.74" y2="1369.00" stroke="#d2d2d2" stroke-width="1.3"/><line x1="1831.39" y1="1146.40" x2="1831.39" y2="1166.40" stroke="#d2d2d2" stroke-width="1.3"/><line x1="1831.39" y1="1202.05" x2="1831.39" y2="1222.05" stroke="#d2d2d2" stroke-width="1.3"/><line x1="1831.39" y1="1293.35" x2="1831.39" y2="1313.35" stroke="#d2d2d2" stroke-width="1.3"/><line x1="1831.39" y1="1349.00" x2="1831.39" y2="1369.00" stroke="#d2d2d2" stroke-width="1.3"/><line x1="1864.69" y1="1146.40" x2="1864.69" y2="1166.40" stroke="#d2d2d2" stroke-width="1.3"/><line x1="1864.69" y1="1202.05" x2="1864.69" y2="1222.05" stroke="#d2d2d2" stroke-width="1.3"/><line x1="1864.69" y1="1293.35" x2="1864.69" y2="1313.35" stroke="#d2d2d2" stroke-width="1.3"/><line x1="1864.69" y1="1349.00" x2="1864.69" y2="1369.00" stroke="#d2d2d2" stroke-width="1.3"/><line x1="1881.34" y1="1146.40" x2="1881.34" y2="1185.40" stroke="#d2d2d2" stroke-width="1.3"/><line x1="1881.34" y1="1202.05" x2="1881.34" y2="1241.05" stroke="#d2d2d2" stroke-width="1.3"/><line x1="1881.34" y1="1274.35" x2="1881.34" y2="1313.35" stroke="#d2d2d2" stroke-width="1.3"/><line x1="1881.34" y1="1330.00" x2="1881.34" y2="1369.00" stroke="#d2d2d2" stroke-width="1.3"/><line x1="1897.98" y1="1146.40" x2="1897.98" y2="1166.40" stroke="#d2d2d2" stroke-width="1.3"/><line x1="1897.98" y1="1202.05" x2="1897.98" y2="1222.05" stroke="#d2d2d2" stroke-width="1.3"/><line x1="1897.98" y1="1293.35" x2="1897.98" y2="1313.35" stroke="#d2d2d2" stroke-width="1.3"/><line x1="1897.98" y1="1349.00" x2="1897.98" y2="1369.00" stroke="#d2d2d2" stroke-width="1.3"/><line x1="1931.28" y1="1146.40" x2="1931.28" y2="1166.40" stroke="#d2d2d2" stroke-width="1.3"/><line x1="1931.28" y1="1202.05" x2="1931.28" y2="1222.05" stroke="#d2d2d2" stroke-width="1.3"/><line x1="1931.28" y1="1293.35" x2="1931.28" y2="1313.35" stroke="#d2d2d2" stroke-width="1.3"/><line x1="1931.28" y1="1349.00" x2="1931.28" y2="1369.00" stroke="#d2d2d2" stroke-width="1.3"/><line x1="1947.93" y1="1146.40" x2="1947.93" y2="1185.40" stroke="#d2d2d2" stroke-width="1.3"/><line x1="1947.93" y1="1202.05" x2="1947.93" y2="1241.05" stroke="#d2d2d2" stroke-width="1.3"/><line x1="1947.93" y1="1274.35" x2="1947.93" y2="1313.35" stroke="#d2d2d2" stroke-width="1.3"/><line x1="1947.93" y1="1330.00" x2="1947.93" y2="1369.00" stroke="#d2d2d2" stroke-width="1.3"/><line x1="1964.58" y1="1146.40" x2="1964.58" y2="1166.40" stroke="#d2d2d2" stroke-width="1.3"/><line x1="1964.58" y1="1202.05" x2="1964.58" y2="1222.05" stroke="#d2d2d2" stroke-width="1.3"/><line x1="1964.58" y1="1293.35" x2="1964.58" y2="1313.35" stroke="#d2d2d2" stroke-width="1.3"/><line x1="1964.58" y1="1349.00" x2="1964.58" y2="1369.00" stroke="#d2d2d2" stroke-width="1.3"/><line x1="1997.88" y1="1146.40" x2="1997.88" y2="1166.40" stroke="#d2d2d2" stroke-width="1.3"/><line x1="1997.88" y1="1202.05" x2="1997.88" y2="1222.05" stroke="#d2d2d2" stroke-width="1.3"/><line x1="1997.88" y1="1293.35" x2="1997.88" y2="1313.35" stroke="#d2d2d2" stroke-width="1.3"/><line x1="1997.88" y1="1349.00" x2="1997.88" y2="1369.00" stroke="#d2d2d2" stroke-width="1.3"/><line x1="2014.53" y1="1146.40" x2="2014.53" y2="1185.40" stroke="#d2d2d2" stroke-width="1.3"/><line x1="2014.53" y1="1202.05" x2="2014.53" y2="1241.05" stroke="#d2d2d2" stroke-width="1.3"/><line x1="2014.53" y1="1274.35" x2="2014.53" y2="1313.35" stroke="#d2d2d2" stroke-width="1.3"/><line x1="2014.53" y1="1330.00" x2="2014.53" y2="1369.00" stroke="#d2d2d2" stroke-width="1.3"/><line x1="2031.18" y1="1146.40" x2="2031.18" y2="1166.40" stroke="#d2d2d2" stroke-width="1.3"/><line x1="2031.18" y1="1202.05" x2="2031.18" y2="1222.05" stroke="#d2d2d2" stroke-width="1.3"/><line x1="2031.18" y1="1293.35" x2="2031.18" y2="1313.35" stroke="#d2d2d2" stroke-width="1.3"/><line x1="2031.18" y1="1349.00" x2="2031.18" y2="1369.00" stroke="#d2d2d2" stroke-width="1.3"/><line x1="2064.47" y1="1146.40" x2="2064.47" y2="1166.40" stroke="#d2d2d2" stroke-width="1.3"/><line x1="2064.47" y1="1202.05" x2="2064.47" y2="1222.05" stroke="#d2d2d2" stroke-width="1.3"/><line x1="2064.47" y1="1293.35" x2="2064.47" y2="1313.35" stroke="#d2d2d2" stroke-width="1.3"/><line x1="2064.47" y1="1349.00" x2="2064.47" y2="1369.00" stroke="#d2d2d2" stroke-width="1.3"/><line x1="2081.12" y1="1146.40" x2="2081.12" y2="1185.40" stroke="#d2d2d2" stroke-width="1.3"/><line x1="2081.12" y1="1202.05" x2="2081.12" y2="1241.05" stroke="#d2d2d2" stroke-width="1.3"/><line x1="2081.12" y1="1274.35" x2="2081.12" y2="1313.35" stroke="#d2d2d2" stroke-width="1.3"/><line x1="2081.12" y1="1330.00" x2="2081.12" y2="1369.00" stroke="#d2d2d2" stroke-width="1.3"/><line x1="2097.77" y1="1146.40" x2="2097.77" y2="1166.40" stroke="#d2d2d2" stroke-width="1.3"/><line x1="2097.77" y1="1202.05" x2="2097.77" y2="1222.05" stroke="#d2d2d2" stroke-width="1.3"/><line x1="2097.77" y1="1293.35" x2="2097.77" y2="1313.35" stroke="#d2d2d2" stroke-width="1.3"/><line x1="2097.77" y1="1349.00" x2="2097.77" y2="1369.00" stroke="#d2d2d2" stroke-width="1.3"/><line x1="2131.07" y1="1146.40" x2="2131.07" y2="1166.40" stroke="#d2d2d2" stroke-width="1.3"/><line x1="2131.07" y1="1202.05" x2="2131.07" y2="1222.05" stroke="#d2d2d2" stroke-width="1.3"/><line x1="2131.07" y1="1293.35" x2="2131.07" y2="1313.35" stroke="#d2d2d2" stroke-width="1.3"/><line x1="2131.07" y1="1349.00" x2="2131.07" y2="1369.00" stroke="#d2d2d2" stroke-width="1.3"/><line x1="2147.72" y1="1146.40" x2="2147.72" y2="1185.40" stroke="#d2d2d2" stroke-width="1.3"/><line x1="2147.72" y1="1202.05" x2="2147.72" y2="1241.05" stroke="#d2d2d2" stroke-width="1.3"/><line x1="2147.72" y1="1274.35" x2="2147.72" y2="1313.35" stroke="#d2d2d2" stroke-width="1.3"/><line x1="2147.72" y1="1330.00" x2="2147.72" y2="1369.00" stroke="#d2d2d2" stroke-width="1.3"/><line x1="2164.37" y1="1146.40" x2="2164.37" y2="1166.40" stroke="#d2d2d2" stroke-width="1.3"/><line x1="2164.37" y1="1202.05" x2="2164.37" y2="1222.05" stroke="#d2d2d2" stroke-width="1.3"/><line x1="2164.37" y1="1293.35" x2="2164.37" y2="1313.35" stroke="#d2d2d2" stroke-width="1.3"/><line x1="2164.37" y1="1349.00" x2="2164.37" y2="1369.00" stroke="#d2d2d2" stroke-width="1.3"/><line x1="2197.67" y1="1146.40" x2="2197.67" y2="1166.40" stroke="#d2d2d2" stroke-width="1.3"/><line x1="2197.67" y1="1202.05" x2="2197.67" y2="1222.05" stroke="#d2d2d2" stroke-width="1.3"/><line x1="2197.67" y1="1293.35" x2="2197.67" y2="1313.35" stroke="#d2d2d2" stroke-width="1.3"/><line x1="2197.67" y1="1349.00" x2="2197.67" y2="1369.00" stroke="#d2d2d2" stroke-width="1.3"/><line x1="2214.31" y1="1146.40" x2="2214.31" y2="1185.40" stroke="#d2d2d2" stroke-width="1.3"/><line x1="2214.31" y1="1202.05" x2="2214.31" y2="1241.05" stroke="#d2d2d2" stroke-width="1.3"/><line x1="2214.31" y1="1274.35" x2="2214.31" y2="1313.35" stroke="#d2d2d2" stroke-width="1.3"/><line x1="2214.31" y1="1330.00" x2="2214.31" y2="1369.00" stroke="#d2d2d2" stroke-width="1.3"/><line x1="2230.96" y1="1146.40" x2="2230.96" y2="1166.40" stroke="#d2d2d2" stroke-width="1.3"/><line x1="2230.96" y1="1202.05" x2="2230.96" y2="1222.05" stroke="#d2d2d2" stroke-width="1.3"/><line x1="2230.96" y1="1293.35" x2="2230.96" y2="1313.35" stroke="#d2d2d2" stroke-width="1.3"/><line x1="2230.96" y1="1349.00" x2="2230.96" y2="1369.00" stroke="#d2d2d2" stroke-width="1.3"/><line x1="2264.26" y1="1146.40" x2="2264.26" y2="1166.40" stroke="#d2d2d2" stroke-width="1.3"/><line x1="2264.26" y1="1202.05" x2="2264.26" y2="1222.05" stroke="#d2d2d2" stroke-width="1.3"/><line x1="2264.26" y1="1293.35" x2="2264.26" y2="1313.35" stroke="#d2d2d2" stroke-width="1.3"/><line x1="2264.26" y1="1349.00" x2="2264.26" y2="1369.00" stroke="#d2d2d2" stroke-width="1.3"/><line x1="2280.91" y1="1146.40" x2="2280.91" y2="1185.40" stroke="#d2d2d2" stroke-width="1.3"/><line x1="2280.91" y1="1202.05" x2="2280.91" y2="1241.05" stroke="#d2d2d2" stroke-width="1.3"/><line x1="2280.91" y1="1274.35" x2="2280.91" y2="1313.35" stroke="#d2d2d2" stroke-width="1.3"/><line x1="2280.91" y1="1330.00" x2="2280.91" y2="1369.00" stroke="#d2d2d2" stroke-width="1.3"/><line x1="2297.56" y1="1146.40" x2="2297.56" y2="1166.40" stroke="#d2d2d2" stroke-width="1.3"/><line x1="2297.56" y1="1202.05" x2="2297.56" y2="1222.05" stroke="#d2d2d2" stroke-width="1.3"/><line x1="2297.56" y1="1293.35" x2="2297.56" y2="1313.35" stroke="#d2d2d2" stroke-width="1.3"/><line x1="2297.56" y1="1349.00" x2="2297.56" y2="1369.00" stroke="#d2d2d2" stroke-width="1.3"/><line x1="2330.86" y1="1146.40" x2="2330.86" y2="1166.40" stroke="#d2d2d2" stroke-width="1.3"/><line x1="2330.86" y1="1202.05" x2="2330.86" y2="1222.05" stroke="#d2d2d2" stroke-width="1.3"/><line x1="2330.86" y1="1293.35" x2="2330.86" y2="1313.35" stroke="#d2d2d2" stroke-width="1.3"/><line x1="2330.86" y1="1349.00" x2="2330.86" y2="1369.00" stroke="#d2d2d2" stroke-width="1.3"/><line x1="2347.51" y1="1146.40" x2="2347.51" y2="1185.40" stroke="#d2d2d2" stroke-width="1.3"/><line x1="2347.51" y1="1202.05" x2="2347.51" y2="1241.05" stroke="#d2d2d2" stroke-width="1.3"/><line x1="2347.51" y1="1274.35" x2="2347.51" y2="1313.35" stroke="#d2d2d2" stroke-width="1.3"/><line x1="2347.51" y1="1330.00" x2="2347.51" y2="1369.00" stroke="#d2d2d2" stroke-width="1.3"/><line x1="2364.16" y1="1146.40" x2="2364.16" y2="1166.40" stroke="#d2d2d2" stroke-width="1.3"/><line x1="2364.16" y1="1202.05" x2="2364.16" y2="1222.05" stroke="#d2d2d2" stroke-width="1.3"/><line x1="2364.16" y1="1293.35" x2="2364.16" y2="1313.35" stroke="#d2d2d2" stroke-width="1.3"/><line x1="2364.16" y1="1349.00" x2="2364.16" y2="1369.00" stroke="#d2d2d2" stroke-width="1.3"/><line x1="2397.45" y1="1146.40" x2="2397.45" y2="1166.40" stroke="#d2d2d2" stroke-width="1.3"/><line x1="2397.45" y1="1202.05" x2="2397.45" y2="1222.05" stroke="#d2d2d2" stroke-width="1.3"/><line x1="2397.45" y1="1293.35" x2="2397.45" y2="1313.35" stroke="#d2d2d2" stroke-width="1.3"/><line x1="2397.45" y1="1349.00" x2="2397.45" y2="1369.00" stroke="#d2d2d2" stroke-width="1.3"/><line x1="2414.10" y1="1146.40" x2="2414.10" y2="1185.40" stroke="#d2d2d2" stroke-width="1.3"/><line x1="2414.10" y1="1202.05" x2="2414.10" y2="1241.05" stroke="#d2d2d2" stroke-width="1.3"/><line x1="2414.10" y1="1274.35" x2="2414.10" y2="1313.35" stroke="#d2d2d2" stroke-width="1.3"/><line x1="2414.10" y1="1330.00" x2="2414.10" y2="1369.00" stroke="#d2d2d2" stroke-width="1.3"/><line x1="2430.75" y1="1146.40" x2="2430.75" y2="1166.40" stroke="#d2d2d2" stroke-width="1.3"/><line x1="2430.75" y1="1202.05" x2="2430.75" y2="1222.05" stroke="#d2d2d2" stroke-width="1.3"/><line x1="2430.75" y1="1293.35" x2="2430.75" y2="1313.35" stroke="#d2d2d2" stroke-width="1.3"/><line x1="2430.75" y1="1349.00" x2="2430.75" y2="1369.00" stroke="#d2d2d2" stroke-width="1.3"/><rect x="849.10" y="1146.40" width="1598.30" height="222.60" rx="10" fill="none" stroke="#d2d2d2" stroke-width="1.5"/><rect x="849.10" y="1169.2" width="732.55" height="10.5" fill="#767676"/><rect x="1599.64" y="1169.2" width="847.76" height="10.5" fill="#767676"/><line x1="1581.65" y1="1174" x2="1581.65" y2="1285" stroke="#666" stroke-width="1.2"/><line x1="1599.64" y1="1174" x2="1599.64" y2="1285" stroke="#666" stroke-width="1.2"/><rect x="1581.65" y="1280" width="17.98" height="10.7" fill="#e60f00"/></svg>
<div class="t" style="top:1114.22px;font-size:20.64px;color:#4a4a4a;font-weight:400;-webkit-text-stroke:0.62px #4a4a4a;left:840.21px;">M</div>
<div class="t" style="top:1114.22px;font-size:20.64px;color:#4a4a4a;font-weight:400;-webkit-text-stroke:0.62px #4a4a4a;left:909.66px;">1</div>
<div class="t" style="top:1114.22px;font-size:20.64px;color:#4a4a4a;font-weight:400;-webkit-text-stroke:0.62px #4a4a4a;left:976.25px;">2</div>
<div class="t" style="top:1114.22px;font-size:20.64px;color:#4a4a4a;font-weight:400;-webkit-text-stroke:0.62px #4a4a4a;left:1042.85px;">3</div>
<div class="t" style="top:1114.22px;font-size:20.64px;color:#4a4a4a;font-weight:400;-webkit-text-stroke:0.62px #4a4a4a;left:1109.45px;">4</div>
<div class="t" style="top:1114.22px;font-size:20.64px;color:#4a4a4a;font-weight:400;-webkit-text-stroke:0.62px #4a4a4a;left:1176.04px;">5</div>
<div class="t" style="top:1114.22px;font-size:20.64px;color:#4a4a4a;font-weight:400;-webkit-text-stroke:0.62px #4a4a4a;left:1242.64px;">6</div>
<div class="t" style="top:1114.22px;font-size:20.64px;color:#4a4a4a;font-weight:400;-webkit-text-stroke:0.62px #4a4a4a;left:1309.23px;">7</div>
<div class="t" style="top:1114.22px;font-size:20.64px;color:#4a4a4a;font-weight:400;-webkit-text-stroke:0.62px #4a4a4a;left:1375.83px;">8</div>
<div class="t" style="top:1114.22px;font-size:20.64px;color:#4a4a4a;font-weight:400;-webkit-text-stroke:0.62px #4a4a4a;left:1442.42px;">9</div>
<div class="t" style="top:1114.22px;font-size:20.64px;color:#4a4a4a;font-weight:400;-webkit-text-stroke:0.62px #4a4a4a;left:1503.29px;">10</div>
<div class="t" style="top:1114.22px;font-size:20.64px;color:#4a4a4a;font-weight:400;-webkit-text-stroke:0.62px #4a4a4a;left:1570.65px;">11</div>
<div class="t" style="top:1114.22px;font-size:20.64px;color:#4a4a4a;font-weight:400;-webkit-text-stroke:0.62px #4a4a4a;left:1640.50px;">N</div>
<div class="t" style="top:1114.22px;font-size:20.64px;color:#4a4a4a;font-weight:400;-webkit-text-stroke:0.62px #4a4a4a;left:1708.81px;">1</div>
<div class="t" style="top:1114.22px;font-size:20.64px;color:#4a4a4a;font-weight:400;-webkit-text-stroke:0.62px #4a4a4a;left:1775.40px;">2</div>
<div class="t" style="top:1114.22px;font-size:20.64px;color:#4a4a4a;font-weight:400;-webkit-text-stroke:0.62px #4a4a4a;left:1842.00px;">3</div>
<div class="t" style="top:1114.22px;font-size:20.64px;color:#4a4a4a;font-weight:400;-webkit-text-stroke:0.62px #4a4a4a;left:1908.60px;">4</div>
<div class="t" style="top:1114.22px;font-size:20.64px;color:#4a4a4a;font-weight:400;-webkit-text-stroke:0.62px #4a4a4a;left:1975.19px;">5</div>
<div class="t" style="top:1114.22px;font-size:20.64px;color:#4a4a4a;font-weight:400;-webkit-text-stroke:0.62px #4a4a4a;left:2041.79px;">6</div>
<div class="t" style="top:1114.22px;font-size:20.64px;color:#4a4a4a;font-weight:400;-webkit-text-stroke:0.62px #4a4a4a;left:2108.38px;">7</div>
<div class="t" style="top:1114.22px;font-size:20.64px;color:#4a4a4a;font-weight:400;-webkit-text-stroke:0.62px #4a4a4a;left:2174.98px;">8</div>
<div class="t" style="top:1114.22px;font-size:20.64px;color:#4a4a4a;font-weight:400;-webkit-text-stroke:0.62px #4a4a4a;left:2241.57px;">9</div>
<div class="t" style="top:1114.22px;font-size:20.64px;color:#4a4a4a;font-weight:400;-webkit-text-stroke:0.62px #4a4a4a;left:2302.44px;">10</div>
<div class="t" style="top:1114.22px;font-size:20.64px;color:#4a4a4a;font-weight:400;-webkit-text-stroke:0.62px #4a4a4a;left:2369.80px;">11</div>
<div class="t" style="top:1114.22px;font-size:20.64px;color:#4a4a4a;font-weight:400;-webkit-text-stroke:0.62px #4a4a4a;left:2438.51px;">M</div>
<div class="t" style="top:1165.02px;font-size:20.64px;color:#4a4a4a;font-weight:400;-webkit-text-stroke:0.62px #4a4a4a;left:792.50px;transform:scaleX(0.9448);transform-origin:0 0;">OFF</div>
<div class="t" style="top:1165.02px;font-size:20.64px;color:#3a3a3a;font-weight:400;-webkit-text-stroke:0.62px #3a3a3a;left:2464.50px;transform:scaleX(1.1214);transform-origin:0 0;">23.73</div>
<div class="t" style="top:1220.32px;font-size:20.64px;color:#4a4a4a;font-weight:400;-webkit-text-stroke:0.62px #4a4a4a;left:805.60px;transform:scaleX(0.9395);transform-origin:0 0;">SB</div>
<div class="t" style="top:1220.32px;font-size:20.64px;color:#3a3a3a;font-weight:400;-webkit-text-stroke:0.62px #3a3a3a;left:2464.50px;transform:scaleX(1.1214);transform-origin:0 0;">00.00</div>
<div class="t" style="top:1275.72px;font-size:20.64px;color:#4a4a4a;font-weight:400;-webkit-text-stroke:0.62px #4a4a4a;left:817.90px;transform:scaleX(0.9099);transform-origin:0 0;">D</div>
<div class="t" style="top:1275.72px;font-size:20.64px;color:#3a3a3a;font-weight:400;-webkit-text-stroke:0.62px #3a3a3a;left:2464.50px;transform:scaleX(1.1214);transform-origin:0 0;">00.27</div>
<div class="t" style="top:1331.32px;font-size:20.64px;color:#4a4a4a;font-weight:400;-webkit-text-stroke:0.62px #4a4a4a;left:800.80px;transform:scaleX(0.9899);transform-origin:0 0;">ON</div>
<div class="t" style="top:1331.32px;font-size:20.64px;color:#3a3a3a;font-weight:400;-webkit-text-stroke:0.62px #3a3a3a;left:2464.50px;transform:scaleX(1.1214);transform-origin:0 0;">00.00</div>
<div class="t" style="top:1430.53px;font-size:28.31px;color:#2a2a2a;font-weight:400;left:795.00px;transform:scaleX(1.0388);transform-origin:0 0;">Violations:</div>
<div class="b" style="left:955.60px;top:1424.00px;width:269.70px;height:47.50px;background:#fde8e8;border-radius:6px;"></div>
<div class="t" style="top:1431.53px;font-size:28.90px;color:#d6190f;font-weight:400;left:967.80px;transform:scaleX(0.9764);transform-origin:0 0;">70 Hour Cycle Limit</div>
<div class="b" style="left:753.00px;top:1510.00px;width:1825.00px;height:210.00px;border:2px solid #e6e6e6;border-bottom:none;border-right:none;border-radius:8px 0 0 0;box-sizing:border-box;"></div>
<div class="b" style="left:754.00px;top:1591.30px;width:1822.00px;height:2.00px;background:#d0d0d0;"></div>
<div class="t" style="top:1539.88px;font-size:23.53px;color:#555;font-weight:400;-webkit-text-stroke:0.71px #555;left:795.00px;transform:scaleX(1.0753);transform-origin:0 0;">Status</div>
<div class="t" style="top:1539.88px;font-size:23.53px;color:#555;font-weight:400;-webkit-text-stroke:0.71px #555;left:979.00px;transform:scaleX(1.0580);transform-origin:0 0;">Time (PST)</div>
<div class="t" style="top:1539.88px;font-size:23.53px;color:#555;font-weight:400;-webkit-text-stroke:0.71px #555;left:1295.36px;transform:scaleX(1.0906);transform-origin:0 0;">Duration</div>
<div class="t" style="top:1539.88px;font-size:23.53px;color:#555;font-weight:400;-webkit-text-stroke:0.71px #555;left:1442.60px;transform:scaleX(1.0993);transform-origin:0 0;">Location</div>
<div class="t" style="top:1539.88px;font-size:23.53px;color:#555;font-weight:400;-webkit-text-stroke:0.71px #555;left:1818.00px;transform:scaleX(1.0592);transform-origin:0 0;">CMV</div>
<div class="t" style="top:1539.88px;font-size:23.53px;color:#555;font-weight:400;-webkit-text-stroke:0.71px #555;left:2218.00px;transform:scaleX(1.0803);transform-origin:0 0;">Notes</div>
<div class="b" style="left:794.30px;top:1630.60px;width:58.20px;height:34.20px;border:2px solid #b8b8b8;border-radius:17px;box-sizing:border-box;"></div>
<div class="t" style="top:1638.30px;font-size:20.90px;color:#111;font-weight:400;-webkit-text-stroke:0.63px #111;left:804.80px;transform:scaleX(0.8864);transform-origin:0 0;">OFF</div>
<svg class="b" style="left:862px;top:1630px" width="30" height="32"><circle cx="15" cy="9.5" r="6" fill="none" stroke="#666" stroke-width="2"/><path d="M4 30 L4 26 Q4 19 11 19 L19 19 Q26 19 26 26 L26 30" fill="none" stroke="#666" stroke-width="2"/></svg>
<div class="t" style="top:1632.38px;font-size:27.89px;color:#2a2a2a;font-weight:400;left:980.00px;transform:scaleX(1.1036);transform-origin:0 0;">12:00:00 AM</div>
<div class="t" style="top:1632.38px;font-size:27.89px;color:#2a2a2a;font-weight:400;left:1342.15px;transform:scaleX(1.1433);transform-origin:0 0;">11h</div>
<div class="t" style="top:1632.38px;font-size:27.89px;color:#2a2a2a;font-weight:400;left:1442.60px;transform:scaleX(1.0604);transform-origin:0 0;">New York City, NY</div>
<div class="t" style="top:1632.38px;font-size:27.89px;color:#2a2a2a;font-weight:400;left:2218.00px;transform:scaleX(1.0581);transform-origin:0 0;">Manually added</div>
<div class="b" style="left:680.00px;top:1682.00px;width:2000.00px;height:418.00px;background:#e2e2e2;z-index:4;"></div>
<div class="t" style="top:1704.03px;font-size:23.58px;color:#2a2a2a;font-weight:400;-webkit-text-stroke:0.79px #2a2a2a;left:712.80px;transform:scaleX(1.0833);transform-origin:0 0;z-index:4;">Coaching session notes</div>
<div class="t" style="top:1702.18px;font-size:25.77px;color:#c4160c;font-weight:400;-webkit-text-stroke:0.86px #c4160c;left:996.50px;z-index:4;">*</div>
<div class="b" style="left:705.00px;top:1748.00px;width:1951.20px;height:199.20px;background:#fff;border:2px solid #c8c8c8;border-radius:7px;box-sizing:border-box;z-index:4;"></div>
<div class="t" style="top:1772.15px;font-size:27.70px;color:#555;font-weight:400;left:731.00px;transform:scaleX(1.0703);transform-origin:0 0;z-index:4;">Add notes for this coaching session...</div>
<svg class="b" style="left:2636px;top:1928px;z-index:5" width="16" height="16"><path d="M1.5 13.8 L13.8 1.5 M9.5 13.8 L13.8 9.5" stroke="#555" stroke-width="2.2"/></svg>
<div class="b" style="left:2629px;top:895px;width:51px;height:288px;overflow:hidden;background:#0052cc;z-index:3;"><div class="b" style="left:0;top:24px;width:80px;height:240px;background:#3b6bd6;border-radius:12px;"></div><div class="t" style="left:22.70px;top:210.50px;font-size:32px;color:#fff;-webkit-text-stroke:0.5px #fff;transform-origin:0 0;transform:rotate(-90deg) scaleX(0.9251);">Feedback</div></div>
</div></body></html>
